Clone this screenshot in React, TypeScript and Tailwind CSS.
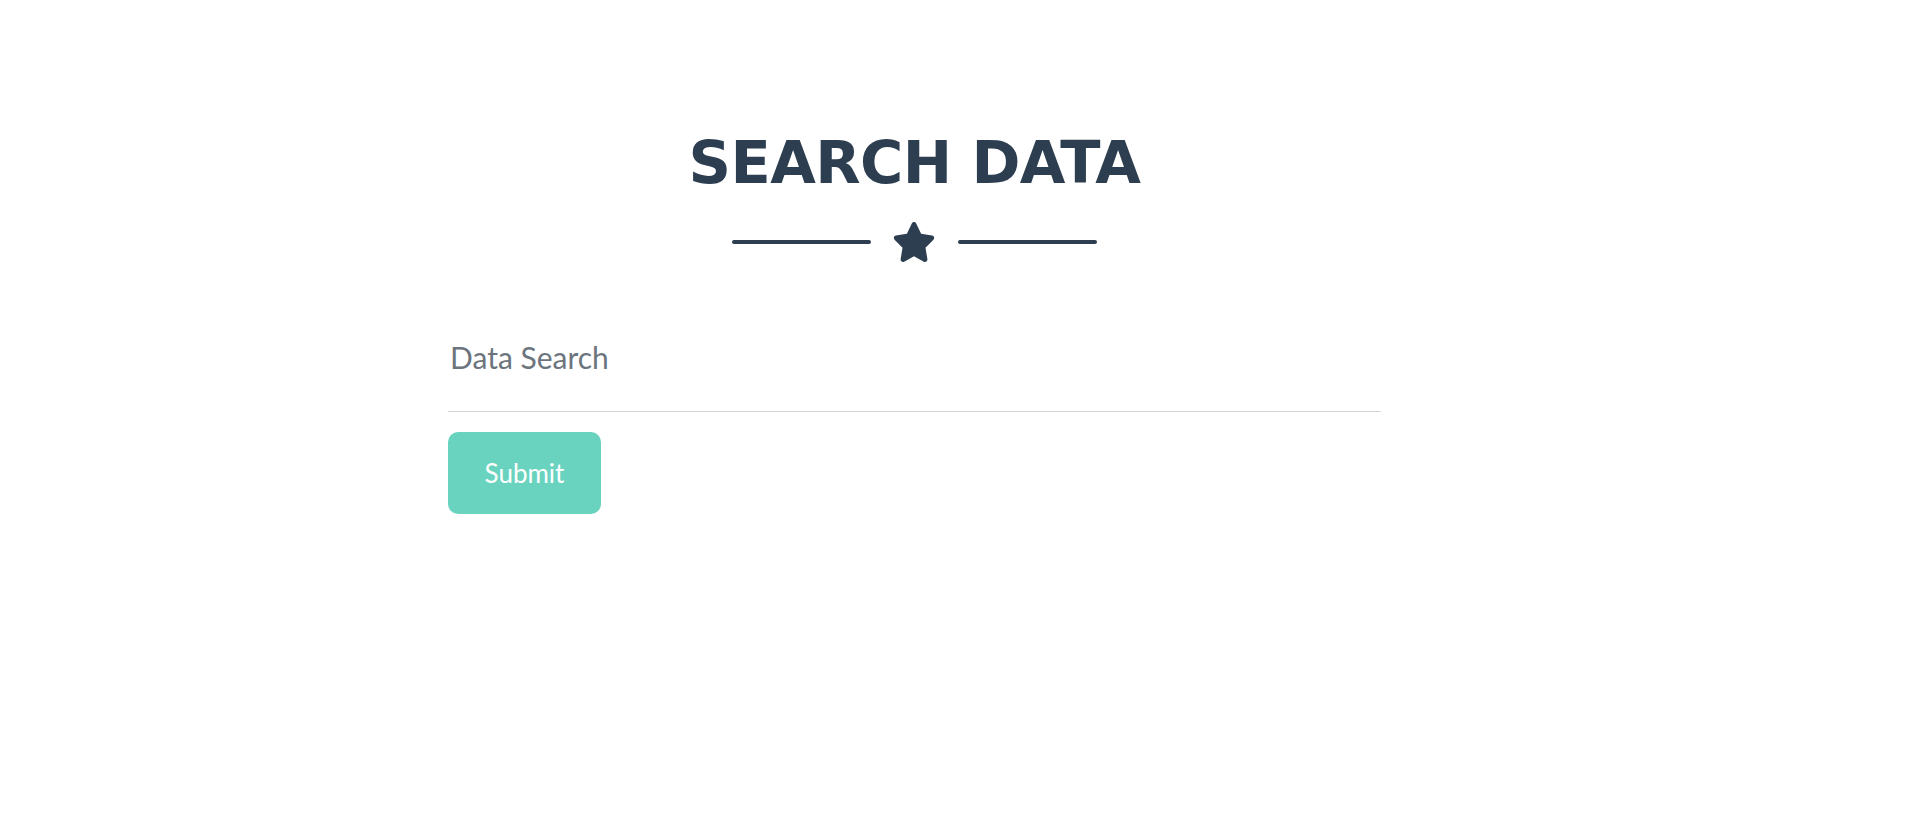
import React from "react";

export default function App() {
  return (
    <div className="min-h-[822px] w-full bg-white">
      <div className="pl-[448px] pt-[133px]">
        <div className="w-[933px] flex flex-col">
          <h1
            className="text-center text-[59px] leading-[59px] font-bold tracking-[-0.6px] text-[#2c3e50] m-0"
            style={{ fontFamily: '"DejaVu Sans", "Liberation Sans", sans-serif' }}
          >
            SEARCH DATA
          </h1>
          <div className="mt-[30px] flex items-center justify-center h-[40px]">
            <div className="w-[139px] h-[4px] rounded-full bg-[#2c3e50]" />
            <svg
              className="ml-[21px] mr-[22px]"
              width="44"
              height="40"
              viewBox="0 0 576 512"
              preserveAspectRatio="none"
              fill="#2c3e50"
            >
              <path d="M316.9 18C311.6 7 300.4 0 288.1 0s-23.4 7-28.8 18L195 150.3 51.4 171.5c-12 1.8-22 10.2-25.7 21.7s-.7 24.2 7.9 32.7L137.8 329 113.2 474.7c-2 12 3 24.2 12.9 31.3s23 8 33.8 2.3l128.3-68.5 128.3 68.5c10.8 5.7 23.9 4.9 33.8-2.3s14.9-19.3 12.9-31.3L438.5 329 542.7 225.9c8.6-8.5 11.7-21.2 7.9-32.7s-13.7-19.9-25.7-21.7L381.2 150.3 316.9 18z" />
            </svg>
            <div className="w-[139px] h-[4px] rounded-full bg-[#2c3e50]" />
          </div>
          <div className="mt-[77px] pb-[36px] border-b border-[#d3d5d9]">
            <input
              type="text"
              placeholder="Data Search"
              className="block w-full h-[36px] leading-[36px] text-[30px] pl-[2px] p-0 outline-none bg-transparent text-[#495057] placeholder:text-[#6c757d]"
              style={{ fontFamily: 'Lato, "Open Sans", sans-serif' }}
            />
          </div>
          <div className="mt-[20px]">
            <button
              type="button"
              className="w-[153px] h-[82px] rounded-[10px] bg-[#6ad3bf] text-white text-[26px] flex items-center justify-center"
              style={{ fontFamily: 'Lato, "Open Sans", sans-serif' }}
            >
              Submit
            </button>
          </div>
        </div>
      </div>
    </div>
  );
}
